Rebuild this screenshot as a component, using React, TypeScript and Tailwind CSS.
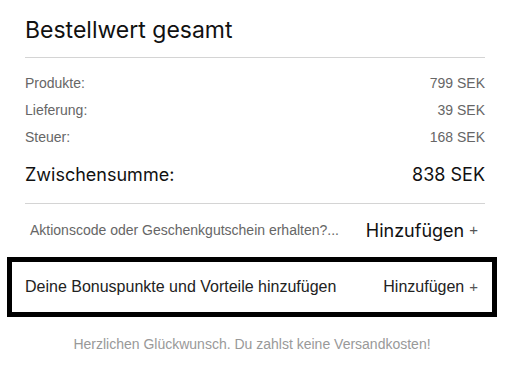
import React from "react";

const rows = [
  { label: "Produkte:", value: "799 SEK" },
  { label: "Lieferung:", value: "39 SEK" },
  { label: "Steuer:", value: "168 SEK" },
];

export default function App() {
  return (
    <div className="w-[513px] h-[379px] bg-white pl-[7px] pr-[16px] font-['Liberation_Sans',Arial,sans-serif]">
      <div className="pl-[18px] pr-[12px]">
        <h1 className="pt-[16px] pb-[13px] text-[23px] leading-[28px] text-[#111] font-['Inter',sans-serif]">
          Bestellwert gesamt
        </h1>
        <div className="border-t border-[#d4d4d4]" />
        <div className="pt-[17px] flex flex-col gap-[11px]">
          {rows.map((r) => (
            <div key={r.label} className="flex justify-between text-[14px] leading-[16px] text-[#666]">
              <span>{r.label}</span>
              <span>{r.value}</span>
            </div>
          ))}
        </div>
        <div className="flex justify-between pt-[18px] pb-[16px] text-[18px] leading-[24px] text-[#111] font-['Inter',sans-serif]">
          <span>Zwischensumme:</span>
          <span>838 SEK</span>
        </div>
        <div className="border-t border-[#d4d4d4]" />
        <div className="flex items-center justify-between h-[53px] pl-[5px] pr-[7px]">
          <span className="text-[14px] text-[#666]">Aktionscode oder Geschenkgutschein erhalten?...</span>
          <span className="flex items-center gap-[5px] text-[18px] text-[#111] font-['Inter',sans-serif]">
            Hinzufügen <span className="text-[15px] text-[#555] font-['Liberation_Sans',Arial,sans-serif]">+</span>
          </span>
        </div>
      </div>
      <div className="border-[5px] border-black h-[60px] flex items-center justify-between pl-[13px] pr-[14px]">
        <span className="text-[16px] text-[#222]">Deine Bonuspunkte und Vorteile hinzufügen</span>
        <span className="flex items-center gap-[5px] text-[16px] text-[#222]">
          Hinzufügen <span className="text-[15px] text-[#555]">+</span>
        </span>
      </div>
      <p className="pt-[17px] text-center text-[14px] leading-[20px] text-[#999]">
        Herzlichen Glückwunsch. Du zahlst keine Versandkosten!
      </p>
    </div>
  );
}
